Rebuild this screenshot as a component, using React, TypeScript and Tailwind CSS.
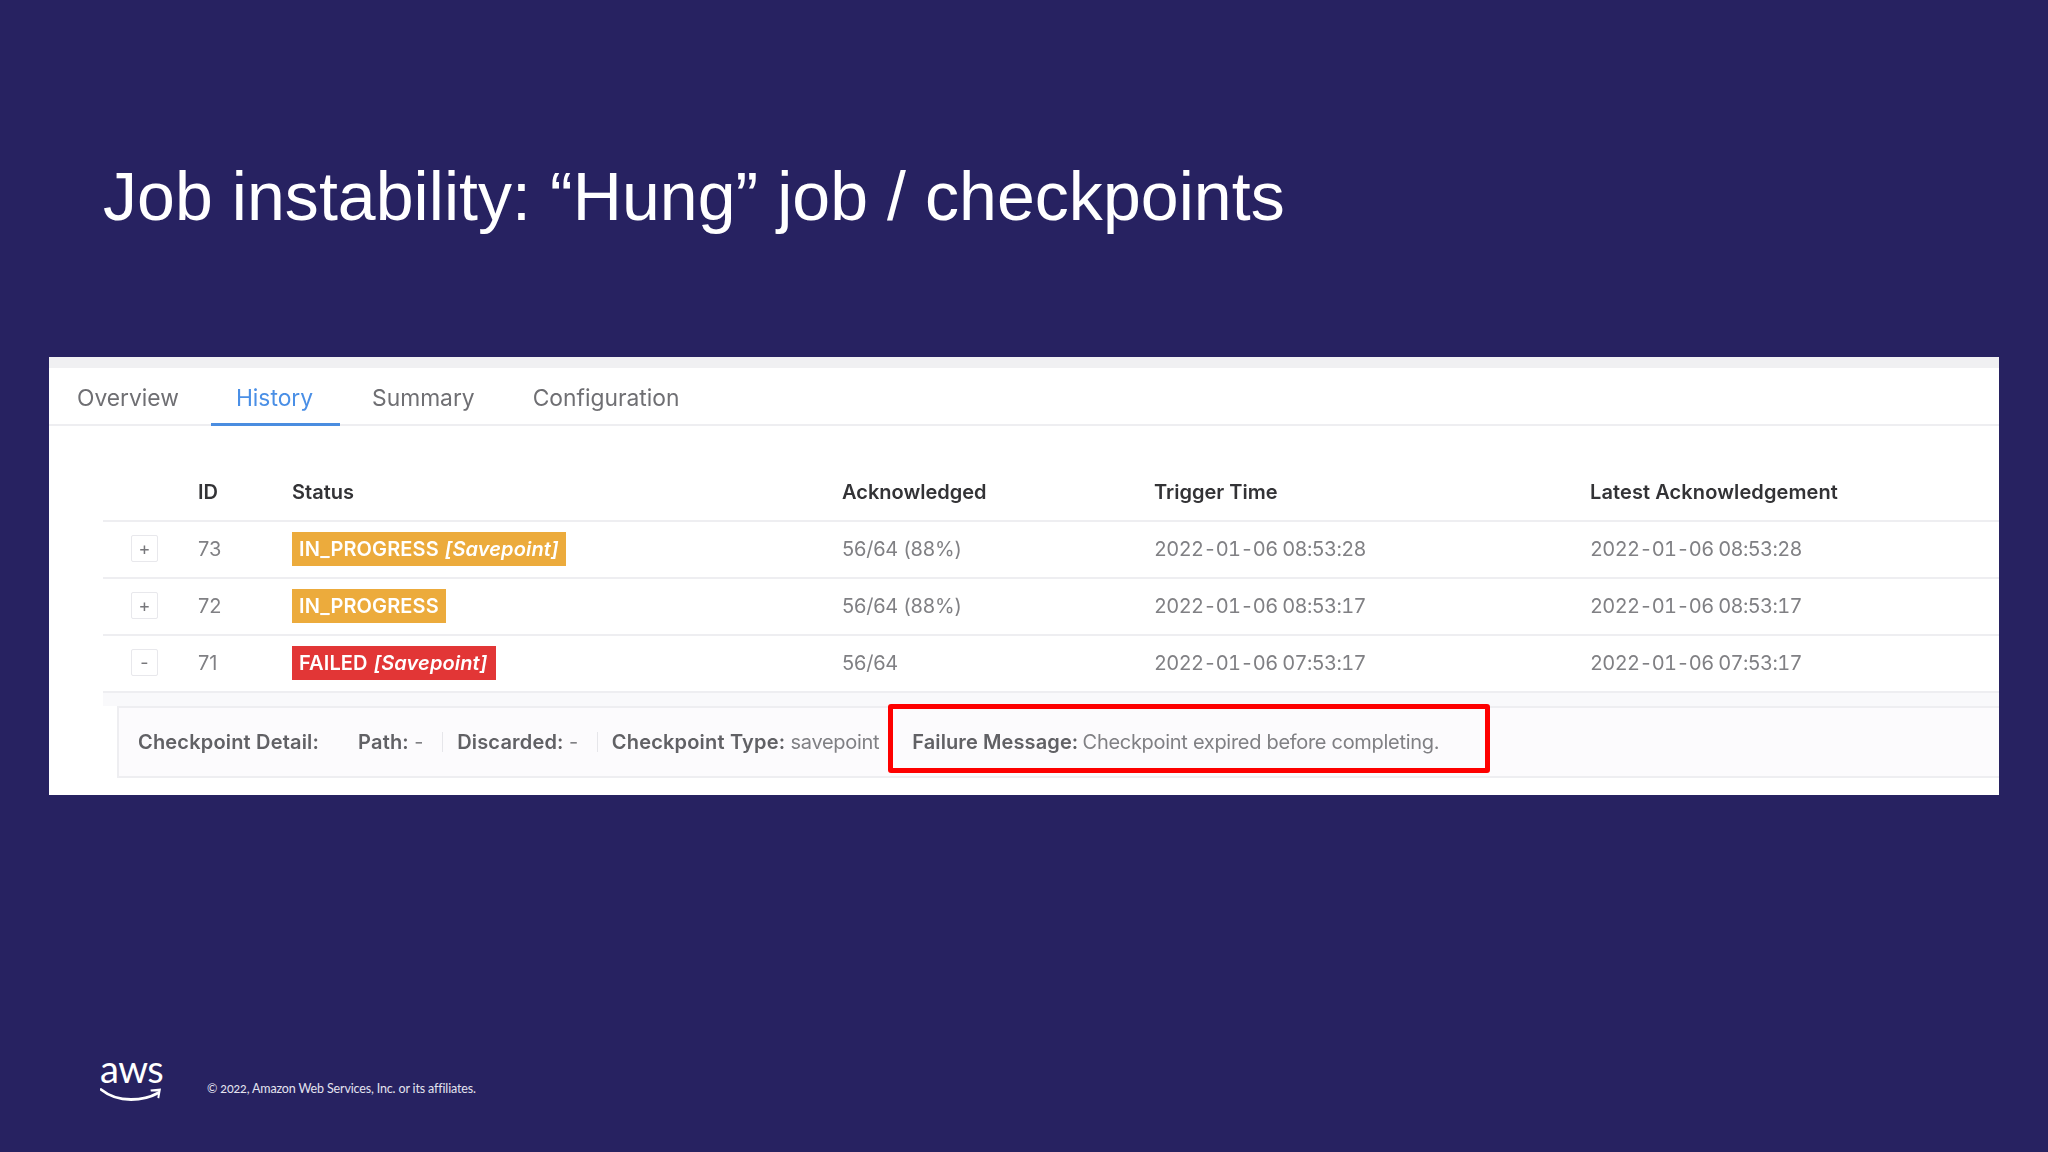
import { Fragment } from "react";

const rows = [
  { id: "73", toggle: "+", status: "IN_PROGRESS", tag: "[Savepoint]", color: "bg-[#ecab3c]", ack: "56/64 (88%)", trigger: "2022-01-06 08:53:28", latest: "2022-01-06 08:53:28" },
  { id: "72", toggle: "+", status: "IN_PROGRESS", tag: "", color: "bg-[#ecab3c]", ack: "56/64 (88%)", trigger: "2022-01-06 08:53:17", latest: "2022-01-06 08:53:17" },
  { id: "71", toggle: "-", status: "FAILED", tag: "[Savepoint]", color: "bg-[#e23636] pr-[9px]", ack: "56/64", trigger: "2022-01-06 07:53:17", latest: "2022-01-06 07:53:17" },
];

const tabs = ["Overview", "History", "Summary", "Configuration"];

function AwsLogo() {
  return (
    <div className="relative w-[62px] h-[40px] text-white">
      <span className="block font-['Lato',sans-serif] text-[38px] leading-[12px] tracking-[-0.6px]">aws</span>
      <svg className="absolute left-0 top-[26px]" width="62" height="14" viewBox="0 0 62 14" fill="none">
        <path d="M1 1.5C9 8 20 11.5 31 11.5C40 11.5 50 9.5 58 5" stroke="white" strokeWidth="2.8" strokeLinecap="round" />
        <path d="M50.5 1.6L61 0.6L59.2 10.5L57.4 9.8L58.2 3.4L50.8 3.4Z" fill="white" />
      </svg>
    </div>
  );
}

export default function App() {
  return (
    <div className="relative w-[2048px] h-[1152px] bg-[#272261] flex flex-col overflow-hidden font-['Inter',sans-serif]">
      <h1 className="pt-[156px] pl-[103px] h-[357px] font-['Liberation_Sans',sans-serif] text-[68px] leading-[80px] tracking-[0.06px] text-white">
        Job instability: “Hung” job / checkpoints
      </h1>

      <div className="relative ml-[49px] w-[1950px] h-[438px] bg-white blur-[0.5px]">
        <div className="h-[11px] bg-[#f0f0f2]" />

        {/* tabs */}
        <div className="flex h-[58px] pl-[28px] border-b-2 border-[#eeeef1] text-[22.8px] text-[#6f6f73]">
          {tabs.map((t) => (
            <div
              key={t}
              className={
                t === "History"
                  ? "flex items-center pl-[25px] pr-[27px] pt-[5px] mr-[32px] mb-[-2px] h-[58px] border-b-[3px] border-[#4a8de0] text-[#4a8fe6]"
                  : t === "Overview"
                    ? "flex items-center pt-[5px] mr-[32px]"
                    : "flex items-center pt-[5px] mr-[58px]"
              }
            >
              {t}
            </div>
          ))}
        </div>

        {/* table */}
        <div className="ml-[54px] mt-[39px]">
          <div className="grid grid-cols-[95px_94px_550px_312px_436px_1fr] h-[57px] items-center border-b-2 border-[#eeeef1] text-[20px] font-semibold text-[#333336] pb-[2px]">
            <div />
            <div>ID</div>
            <div>Status</div>
            <div>Acknowledged</div>
            <div>Trigger Time</div>
            <div className="tracking-[0.1px]">Latest Acknowledgement</div>
          </div>
          {rows.map((r) => (
            <div
              key={r.id}
              className="grid grid-cols-[95px_94px_550px_312px_436px_1fr] h-[57px] pb-[2px] items-center border-b-2 border-[#eeeef1] text-[20px] text-[#808084]"
            >
              <div className="pl-[28px]">
                <div className="w-[27px] h-[27px] flex items-center justify-center border border-[#e8e8ec] rounded-[2px] text-[18px] text-[#77777b]">
                  {r.toggle}
                </div>
              </div>
              <div>{r.id}</div>
              <div>
                <span className={`inline-block h-[34px] leading-[34px] px-[7px] text-white font-semibold tracking-[0.12px] ${r.color}`}>
                  {r.status}
                  {r.tag && <em className="ml-[6px]">{r.tag}</em>}
                </span>
              </div>
              <div className="tracking-[-0.2px]">{r.ack}</div>
              <div className="tabular-nums tracking-[-0.62px]">{r.trigger}</div>
              <div className="tabular-nums tracking-[-0.62px]">{r.latest}</div>
            </div>
          ))}
        </div>

        {/* checkpoint detail */}
        <div className="h-[13px] ml-[54px] bg-[#f9f9fb]" />
        <div className="ml-[68px] flex items-center h-[72px] pl-[19px] bg-[#fcfbfd] border-y-2 border-l-2 border-[#eeeef1] text-[20px] tracking-[-0.3px] text-[#808084]">
          <span className="font-semibold tracking-[0.18px] text-[#616165] mr-[39px]">Checkpoint Detail:</span>
          {[
            ["Path:", "-"],
            ["Discarded:", "-"],
            ["Checkpoint Type:", "savepoint"],
          ].map(([k, v], i) => (
            <Fragment key={k}>
              {i > 0 && <span className="w-px h-[20px] bg-[#e6e6ea] mx-[14px]" />}
              <span className="whitespace-nowrap">
                <b className="font-semibold tracking-[0.18px] text-[#616165]">{k}</b> {v}
              </span>
              {i < 2 && <span className="w-[5px]" />}
            </Fragment>
          ))}
          <span className="ml-[33px] whitespace-nowrap">
            <b className="font-semibold tracking-[0.1px] text-[#616165]">Failure Message:</b>
            <span className="ml-[-1px]"> Checkpoint expired before completing.</span>
          </span>
        </div>
      </div>

      {/* highlight */}
      <div className="absolute left-[888px] top-[704px] w-[602px] h-[69px] border-[5px] border-[#fe0000] rounded-[3px]" />

      <div className="flex items-end mt-auto pl-[100px] pb-[50px]">
        <AwsLogo />
        <span className="ml-[45px] mb-[5px] font-['Lato',sans-serif] text-[12.5px] leading-[16px] tracking-[-0.15px] oldstyle-nums text-[#e4e3ef]">
          © 2022, Amazon Web Services, Inc. or its affiliates.
        </span>
      </div>
    </div>
  );
}
